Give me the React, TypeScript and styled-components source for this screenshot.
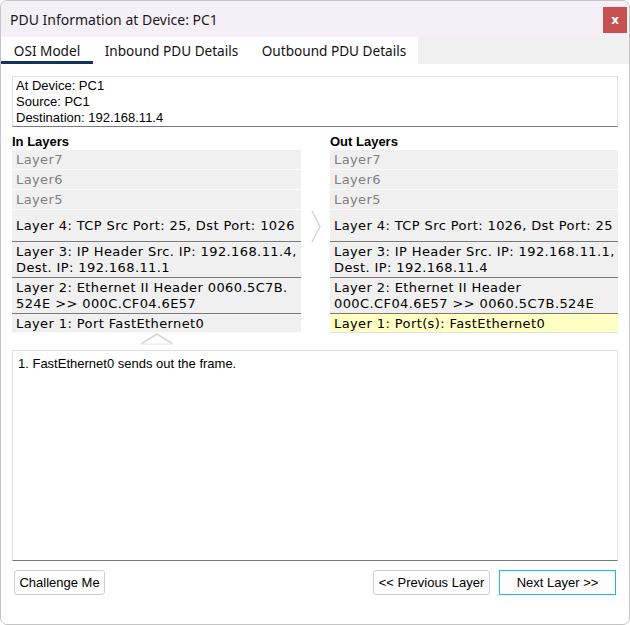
import React from "react";
import styled, { createGlobalStyle } from "styled-components";

const Global = createGlobalStyle`
  html, body { margin: 0; padding: 0; background: #ffffff; }
  * { box-sizing: border-box; }
`;

const Window = styled.div`
  width: 630px;
  height: 625px;
  border: 1px solid #c4c4c4;
  border-radius: 7px;
  overflow: hidden;
  background: #ffffff;
  display: flex;
  flex-direction: column;
`;

const TitleBar = styled.div`
  height: 36px;
  background: #f5eff8;
  display: flex;
  align-items: center;
  justify-content: space-between;
  padding: 0 2px 0 9px;
`;

const Title = styled.div`
  font-family: "Noto Sans", "Open Sans", sans-serif;
  font-size: 14px;
  color: #1a1a1a;
  padding-top: 1px;
`;

const CloseButton = styled.div`
  width: 24px;
  height: 26px;
  margin-top: 2px;
  background: #c75050;
  color: #ffffff;
  font-family: "DejaVu Sans", sans-serif;
  font-weight: bold;
  font-size: 12px;
  display: flex;
  align-items: center;
  justify-content: center;
`;

const TabBar = styled.div`
  height: 27px;
  display: flex;
  background: #f0f0f0;
`;

const TabStrip = styled.div`
  width: 417px;
  background: #ffffff;
  display: flex;
`;

const Tab = styled.div<{ $active?: boolean; $w: number }>`
  width: ${(p) => p.$w}px;
  font-family: "Noto Sans", "Open Sans", sans-serif;
  font-size: 13.6px;
  color: #111111;
  text-align: center;
  padding-top: 4px;
  border-bottom: 3px solid ${(p) => (p.$active ? "#14335a" : "transparent")};
`;

const Body = styled.div`
  flex: 1;
  display: flex;
  flex-direction: column;
  padding: 12px 11px 0 11px;
`;

const InfoBox = styled.div`
  height: 51px;
  border: 1px solid #e0e0e0;
  border-bottom: 1px solid #7a7a7a;
  padding: 1px 0 0 3px;
  font-family: "Liberation Sans", Arial, sans-serif;
  font-size: 13px;
  line-height: 16px;
  color: #000000;
`;

const Columns = styled.div`
  display: grid;
  grid-template-columns: 289px 29px 288px;
  margin-top: 7px;
`;

const Column = styled.div`
  display: flex;
  flex-direction: column;
`;

const ColumnTitle = styled.div`
  font-family: "Liberation Sans", Arial, sans-serif;
  font-weight: bold;
  font-size: 13px;
  line-height: 16px;
  height: 16px;
  color: #000000;
`;

const LayerRow = styled.div<{ $h: number; $dim?: boolean; $dark?: boolean; $hl?: boolean; $shift?: number }>`
  height: ${(p) => p.$h}px;
  background: ${(p) => (p.$hl ? "#ffffc4" : "#f0f0f0")};
  border-bottom: 1px solid ${(p) => (p.$dark ? "#7a7a7a" : p.$hl ? "#e0e0e0" : "#fafafa")};
  color: ${(p) => (p.$dim ? "#808080" : "#000000")};
  font-family: "DejaVu Sans", Verdana, sans-serif;
  font-size: 13px;
  letter-spacing: 0.4px;
  line-height: 16px;
  padding: ${(p) => p.$shift || 0}px 4px 0 4px;
  display: flex;
  flex-direction: column;
  justify-content: center;
  white-space: nowrap;
`;

const Middle = styled.div`
  display: flex;
  flex-direction: column;
  align-items: center;
  padding-top: 76px;
`;

const UnderArrow = styled.div`
  height: 18px;
  display: flex;
  justify-content: center;
  width: 289px;
`;

const Notes = styled.div`
  height: 211px;
  margin-top: -1px;
  border: 1px solid #e0e0e0;
  border-bottom: 1px solid #7a7a7a;
  padding: 5px 0 0 5px;
  font-family: "Liberation Sans", Arial, sans-serif;
  font-size: 13px;
  color: #000000;
`;

const ButtonRow = styled.div`
  display: flex;
  align-items: center;
  margin-top: 9px;
  padding: 0 2px 0 2px;
  gap: 9px;
`;

const Spacer = styled.div`
  flex: 1;
`;

const Button = styled.div<{ $w: number; $focus?: boolean }>`
  width: ${(p) => p.$w}px;
  height: 25px;
  border: 1px solid ${(p) => (p.$focus ? "#1cb8e6" : "#cfcfcf")};
  border-radius: ${(p) => (p.$focus ? "0" : "3px")};
  background: #fdfdfd;
  font-family: "Liberation Sans", Arial, sans-serif;
  font-size: 13px;
  color: #000000;
  display: flex;
  align-items: center;
  justify-content: center;
`;

type Layer = { text: React.ReactNode; h: number; dim?: boolean; dark?: boolean; hl?: boolean; shift?: number };

const inLayers: Layer[] = [
  { text: "Layer7", h: 20, dim: true },
  { text: "Layer6", h: 20, dim: true },
  { text: "Layer5", h: 20, dim: true },
  { text: "Layer 4: TCP Src Port: 25, Dst Port: 1026", h: 32, dark: true },
  { text: <>Layer 3: IP Header Src. IP: 192.168.11.4,<br />Dest. IP: 192.168.11.1</>, h: 36, dark: true },
  { text: <>Layer 2: Ethernet II Header 0060.5C7B.<br />524E &gt;&gt; 000C.CF04.6E57</>, h: 36, dark: true },
  { text: "Layer 1: Port FastEthernet0", h: 19, shift: 2 },
];

const outLayers: Layer[] = [
  { text: "Layer7", h: 20, dim: true },
  { text: "Layer6", h: 20, dim: true },
  { text: "Layer5", h: 20, dim: true },
  { text: "Layer 4: TCP Src Port: 1026, Dst Port: 25", h: 32, dark: true },
  { text: <>Layer 3: IP Header Src. IP: 192.168.11.1,<br />Dest. IP: 192.168.11.4</>, h: 36, dark: true },
  { text: <>Layer 2: Ethernet II Header<br />000C.CF04.6E57 &gt;&gt; 0060.5C7B.524E</>, h: 36, dark: true },
  { text: "Layer 1: Port(s): FastEthernet0", h: 19, hl: true, shift: 2 },
];

const renderLayers = (layers: Layer[]) =>
  layers.map((l, i) => (
    <LayerRow key={i} $h={l.h} $dim={l.dim} $dark={l.dark} $hl={l.hl} $shift={l.shift}>
      <div>{l.text}</div>
    </LayerRow>
  ));

export default function App() {
  return (
    <>
      <Global />
      <Window>
        <TitleBar>
          <Title>PDU Information at Device: PC1</Title>
          <CloseButton>x</CloseButton>
        </TitleBar>
        <TabBar>
          <TabStrip>
            <Tab $active $w={92}>OSI Model</Tab>
            <Tab $w={157}>Inbound PDU Details</Tab>
            <Tab $w={168}>Outbound PDU Details</Tab>
          </TabStrip>
        </TabBar>
        <Body>
          <InfoBox>
            <div>At Device: PC1</div>
            <div>Source: PC1</div>
            <div>Destination: 192.168.11.4</div>
          </InfoBox>
          <Columns>
            <Column>
              <ColumnTitle>In Layers</ColumnTitle>
              {renderLayers(inLayers)}
              <UnderArrow>
                <svg width="34" height="12" viewBox="0 0 34 12">
                  <polyline points="1,11 17,1 33,11" fill="none" stroke="#d6d6d6" strokeWidth="1.5" />
                  <line x1="1" y1="11" x2="33" y2="11" stroke="#e6e6e6" strokeWidth="1" />
                </svg>
              </UnderArrow>
            </Column>
            <Middle>
              <svg width="10" height="33" viewBox="0 0 10 33">
                <polyline points="1,1 9,16.5 1,32" fill="none" stroke="#d6d6d6" strokeWidth="1.5" />
              </svg>
            </Middle>
            <Column>
              <ColumnTitle>Out Layers</ColumnTitle>
              {renderLayers(outLayers)}
            </Column>
          </Columns>
          <Notes>1. FastEthernet0 sends out the frame.</Notes>
          <ButtonRow>
            <Button $w={91}>Challenge Me</Button>
            <Spacer />
            <Button $w={117}>&lt;&lt; Previous Layer</Button>
            <Button $w={117} $focus>Next Layer &gt;&gt;</Button>
          </ButtonRow>
        </Body>
      </Window>
    </>
  );
}
